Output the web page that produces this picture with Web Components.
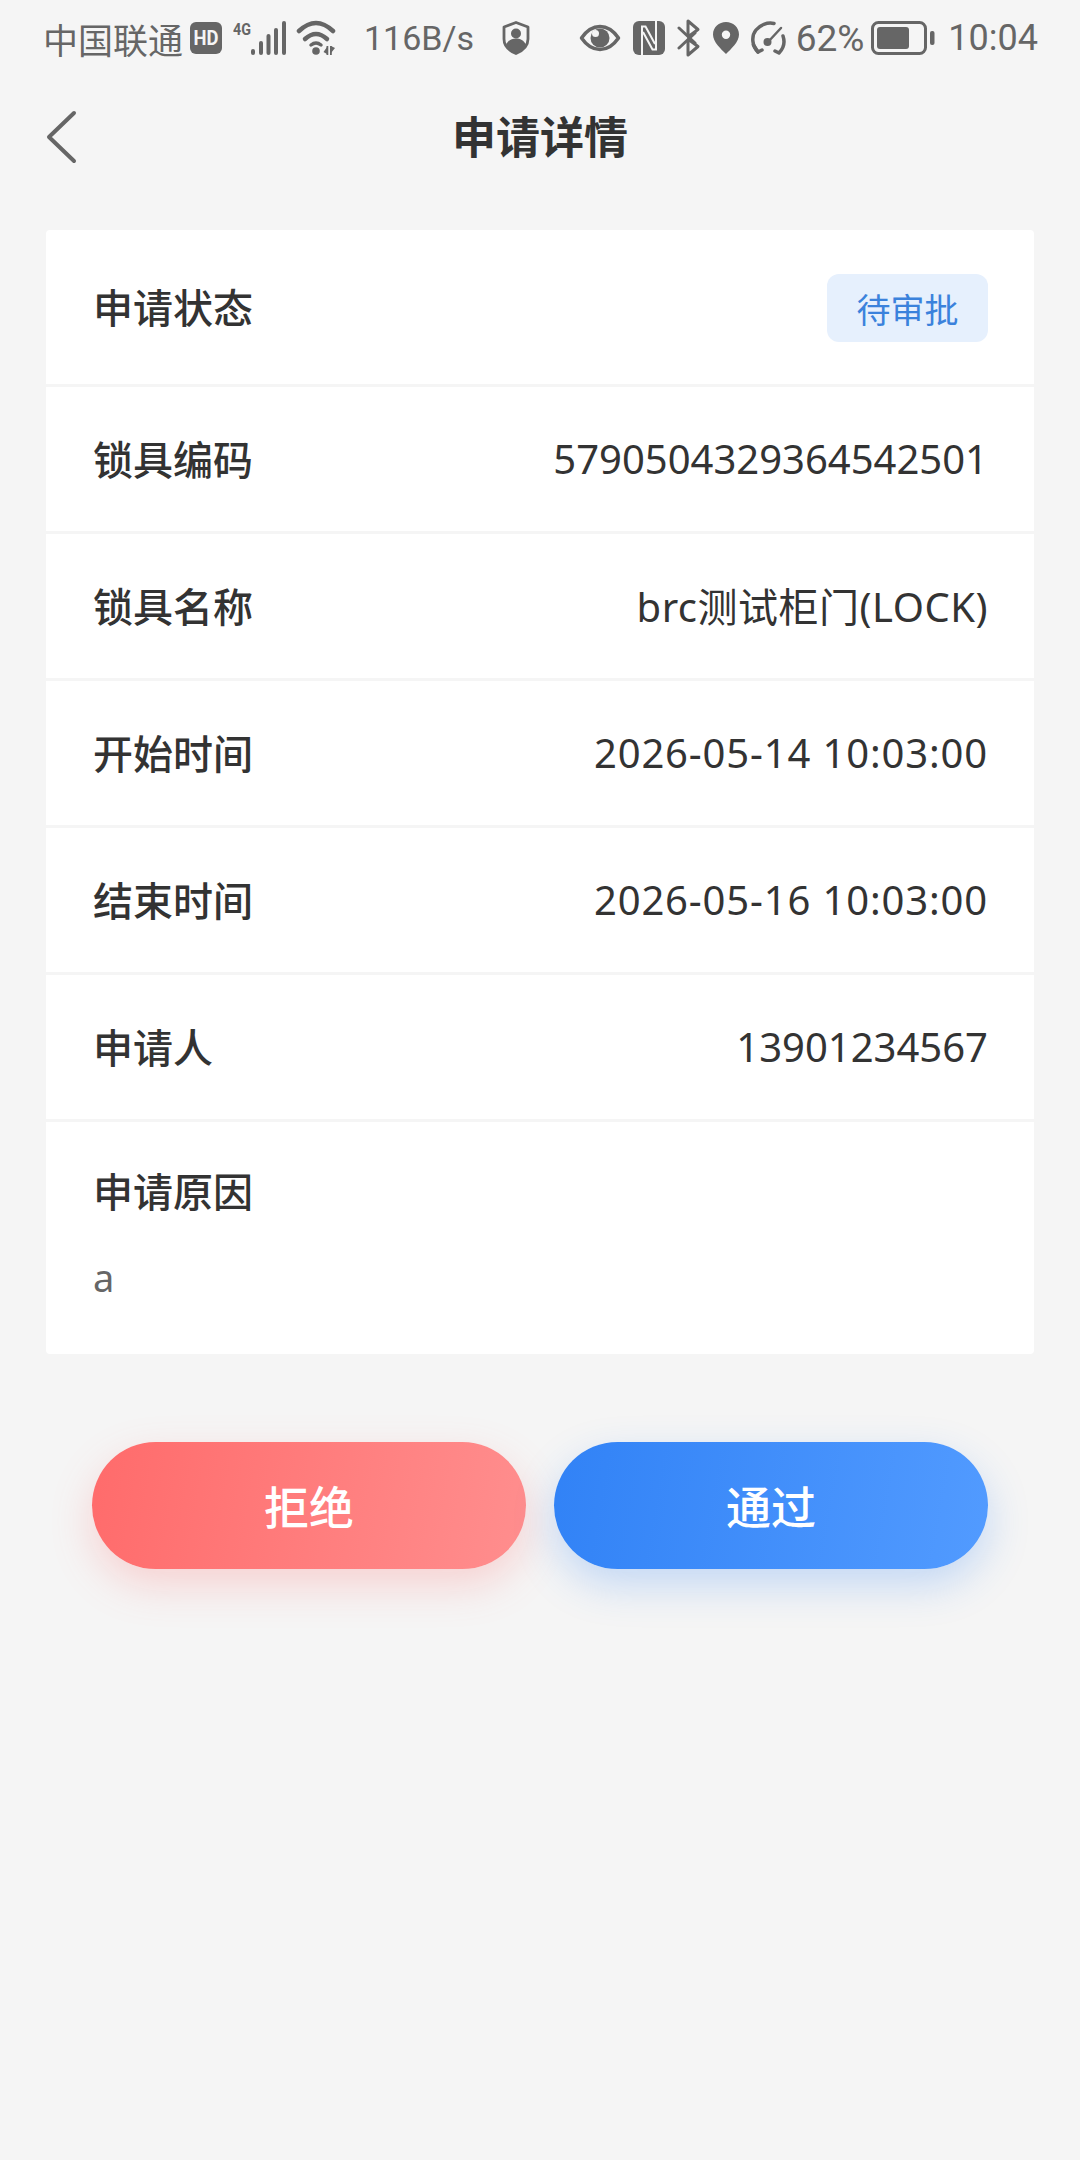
<!DOCTYPE html>
<html lang="zh">
<head>
<meta charset="utf-8">
<title>申请详情</title>
<style>
    html, body {
        margin: 0;
        padding: 0;
        background: #f5f5f5;
    }
    body {
        min-height: 2160px;
        font-family: "Noto Sans", "Noto Sans CJK SC", sans-serif;
    }
</style>
</head>
<body>
<status-bar></status-bar>
<nav-header>申请详情</nav-header>
<detail-card>
    <detail-row label="申请状态" first><status-tag>待审批</status-tag></detail-row>
    <detail-row label="锁具编码">5790504329364542501</detail-row>
    <detail-row label="锁具名称" loose>brc测试柜门(LOCK)</detail-row>
    <detail-row label="开始时间" wide>2026-05-14 10:03:00</detail-row>
    <detail-row label="结束时间" wide>2026-05-16 10:03:00</detail-row>
    <detail-row label="申请人">13901234567</detail-row>
    <reason-block label="申请原因">a</reason-block>
</detail-card>
<action-bar>
    <pill-button kind="reject">拒绝</pill-button>
    <pill-button kind="pass">通过</pill-button>
</action-bar>

<script>
class StatusBar extends HTMLElement {
    constructor() {
        super();
        this.attachShadow({ mode: 'open' });
        this.shadowRoot.innerHTML = `
            <style>
                :host {
                    display: flex;
                    align-items: center;
                    height: 76px;
                    padding: 0 42px 0 43px;
                    color: #666666;
                    font-size: 35px;
                    font-family: "Roboto", "Noto Sans CJK SC", sans-serif;
                    white-space: nowrap;
                }
                svg { display: block; flex: none; fill: #666666; }
                .line { fill: none; stroke: #666666; stroke-linecap: round; stroke-linejoin: round; }
                .carrier { font-size: 35px; margin-right: 7px; }
                .speed { margin-left: 24px; font-size: 34px; width: 110px; }
                .pct { font-size: 37px; margin-left: 8.500px; }
                .time { font-size: 36px; margin-left: 13px; }
                .spacer { flex: 1; }
                text { font-family: "Roboto", sans-serif; font-weight: 700; }
            </style>
            <span class="carrier">中国联通</span>
            <svg width="32" height="32" viewBox="0 0 32 32" aria-hidden="true">
                <rect width="32" height="32" rx="6"/>
                <text x="16" y="23" font-size="20" text-anchor="middle" textLength="25" lengthAdjust="spacingAndGlyphs" fill="#f5f5f5">HD</text>
            </svg>
            <svg width="54" height="34" viewBox="0 0 54 34" style="margin-left:11px" aria-hidden="true">
                <text x="0" y="14" font-size="16" textLength="18" lengthAdjust="spacingAndGlyphs">4G</text>
                <rect x="18" y="28" width="4" height="6" rx="2"/>
                <rect x="26" y="20" width="4" height="14" rx="2"/>
                <rect x="33.500" y="13" width="4" height="21" rx="2"/>
                <rect x="41" y="7" width="4" height="27" rx="2"/>
                <rect x="49" y="0" width="4" height="34" rx="2"/>
            </svg>
            <svg width="44" height="36" viewBox="0 0 44 36" style="margin-left:9px" aria-hidden="true">
                <path class="line" stroke-width="4.500" d="M3 11Q20 -5 37 11"/>
                <path class="line" stroke-width="4.500" d="M9 19Q20 9 31 19"/>
                <path class="line" stroke-width="3.500" d="M15 25Q20 21 25 25"/>
                <circle cx="20" cy="31" r="3.800"/>
                <path d="M31 34v-7l-3.500 5zM35 26v7l4-5z"/>
                <rect x="30.500" y="26" width="1.800" height="9"/>
                <rect x="34" y="26" width="1.800" height="9"/>
            </svg>
            <span class="speed">116B/s</span>
            <svg width="28" height="34" viewBox="0 0 28 34" style="margin-left:28px" aria-hidden="true">
                <path class="line" stroke-width="2.800" d="M14 1.500L26 6v12c0 7-6 12-12 14.500C8 30 2 25 2 18V6z"/>
                <circle cx="14" cy="12.500" r="5"/>
                <path d="M4 24c2-5 6-6.500 10-6.500s8 1.500 10 6.500c-2 4-6 7-10 9-4-2-8-5-10-9z"/>
            </svg>
            <span class="spacer"></span>
            <svg width="42" height="28" viewBox="0 0 42 28" aria-hidden="true">
                <path class="line" stroke-width="3.500" d="M2.500 14C8 6 14 2.500 21 2.500S34 6 39.500 14C34 22 28 25.500 21 25.500S8 22 2.500 14z"/>
                <circle cx="21" cy="14" r="9.500"/>
                <circle cx="16.500" cy="9.500" r="3.500" fill="#f5f5f5"/>
            </svg>
            <svg width="32" height="34" viewBox="0 0 32 34" style="margin-left:12px" aria-hidden="true">
                <rect width="32" height="34" rx="6"/>
                <path d="M9 34V5.500h3.500L22 23" stroke="#f5f5f5" stroke-width="2" fill="none"/>
                <path d="M23 0v28.500h-3.500L10 11" stroke="#f5f5f5" stroke-width="2" fill="none"/>
            </svg>
            <svg width="24" height="38" viewBox="0 0 24 38" style="margin-left:12px" aria-hidden="true">
                <path class="line" stroke-width="3" d="M2 9L18 24"/>
                <path class="line" stroke-width="3" d="M2 29L18 14"/>
                <path class="line" stroke-width="3" d="M11 16V2l10 8.500-9.500 7"/>
                <path class="line" stroke-width="3" d="M11 22v14l10-8.500-9.500-7"/>
            </svg>
            <svg width="26" height="32" viewBox="0 0 26 32" style="margin-left:12px" aria-hidden="true">
                <path fill-rule="evenodd" d="M13 0c7 0 13 5 13 12.500C26 20 18 27 13 32 8 27 0 20 0 12.500 0 5 6 0 13 0zm0 8.500a4.200 4.200 0 1 0 0 8.400 4.200 4.200 0 0 0 0-8.400z"/>
            </svg>
            <svg width="36" height="34" viewBox="0 0 36 34" style="margin-left:12px" aria-hidden="true">
                <path class="line" stroke-width="3.500" d="M7 31C1 25 0 15 5 9c4-5 11-8 18-6.500"/>
                <path class="line" stroke-width="3.500" d="M2.500 24L7 31l4-2"/>
                <path class="line" stroke-width="3.500" d="M32 15c2 6 1 12-4 17l-4-2"/>
                <path class="line" stroke-width="2.500" d="M17 21L30 7"/>
                <circle cx="16.500" cy="21" r="4"/>
            </svg>
            <span class="pct">62%</span>
            <svg width="64" height="34" viewBox="0 0 64 34" style="margin-left:7px" aria-hidden="true">
                <rect class="line" x="1.500" y="1.500" width="53" height="31" rx="6" stroke-width="3"/>
                <rect x="6" y="6" width="32" height="22" rx="3"/>
                <rect x="59" y="10" width="4.500" height="14" rx="2"/>
            </svg>
            <span class="time">10:04</span>
        `;
    }
}

class NavHeader extends HTMLElement {
    constructor() {
        super();
        this.attachShadow({ mode: 'open' });
        this.shadowRoot.innerHTML = `
            <style>
                :host {
                    display: grid;
                    grid-template-columns: 1fr auto 1fr;
                    align-items: center;
                    height: 121px;
                    padding: 0 46px;
                    margin-bottom: 33px;
                    box-sizing: border-box;
                }
                svg { display: block; fill: none; stroke: #666666; stroke-width: 4; stroke-linecap: round; stroke-linejoin: round; }
                .title {
                    font-size: 44px;
                    font-weight: 700;
                    color: #333333;
                    padding-bottom: 3px;
                    font-family: "Noto Sans CJK SC", sans-serif;
                }
            </style>
            <svg width="32" height="54" viewBox="0 0 32 54" aria-hidden="true">
                <path d="M28 3L3 27l25 24"/>
            </svg>
            <span class="title"><slot></slot></span>
        `;
    }
}

class DetailCard extends HTMLElement {
    constructor() {
        super();
        this.attachShadow({ mode: 'open' });
        this.shadowRoot.innerHTML = `
            <style>
                :host {
                    display: block;
                    margin: 0 46px;
                    background: #ffffff;
                    border-radius: 4px;
                    overflow: hidden;
                }
            </style>
            <slot></slot>
        `;
    }
}

class DetailRow extends HTMLElement {
    constructor() {
        super();
        this.attachShadow({ mode: 'open' });
        this.shadowRoot.innerHTML = `
            <style>
                :host {
                    display: flex;
                    justify-content: space-between;
                    align-items: center;
                    box-sizing: border-box;
                    height: 147px;
                    padding: 0 46px 0 47px;
                    border-bottom: 3px solid #f5f5f5;
                    font-size: 40px;
                    color: #333333;
                    font-family: "Noto Sans", "Noto Sans CJK SC", sans-serif;
                    white-space: nowrap;
                }
                :host([first]) { height: 157px; padding-top: 2px; }
                :host([wide]) { letter-spacing: 0.85px; }
                :host([loose]) { letter-spacing: 0.5px; }
                :host(:not([first])) .value { padding-bottom: 2px; }
                .label {
                    font-family: "Noto Sans CJK SC", sans-serif;
                    font-size: 40px;
                    font-weight: 500;
                    letter-spacing: 0;
                    padding-bottom: 3px;
                }
                :host([first]) .label { padding-bottom: 5px; }
            </style>
            <span class="label"></span>
            <span class="value"><slot></slot></span>
        `;
        this.shadowRoot.querySelector('.label').textContent = this.getAttribute('label');
    }
}

class StatusTag extends HTMLElement {
    constructor() {
        super();
        this.attachShadow({ mode: 'open' });
        this.shadowRoot.innerHTML = `
            <style>
                :host {
                    display: flex;
                    align-items: center;
                    justify-content: center;
                    width: 161px;
                    height: 68px;
                    border-radius: 12px;
                    background: #e6f0fd;
                    color: #3b82dc;
                    font-size: 34px;
                    font-family: "Noto Sans CJK SC", sans-serif;
                }
            </style>
            <slot></slot>
        `;
    }
}

class ReasonBlock extends HTMLElement {
    constructor() {
        super();
        this.attachShadow({ mode: 'open' });
        this.shadowRoot.innerHTML = `
            <style>
                :host {
                    display: block;
                    box-sizing: border-box;
                    height: 232px;
                    padding: 39px 47px 0;
                }
                .label {
                    font-size: 40px;
                    font-weight: 500;
                    line-height: 58px;
                    color: #333333;
                    font-family: "Noto Sans CJK SC", sans-serif;
                }
                .text {
                    margin-top: 33px;
                    font-size: 38px;
                    line-height: 50px;
                    color: #666666;
                    font-family: "Noto Sans", "Noto Sans CJK SC", sans-serif;
                }
            </style>
            <div class="label"></div>
            <div class="text"><slot></slot></div>
        `;
        this.shadowRoot.querySelector('.label').textContent = this.getAttribute('label');
    }
}

class ActionBar extends HTMLElement {
    constructor() {
        super();
        this.attachShadow({ mode: 'open' });
        this.shadowRoot.innerHTML = `
            <style>
                :host {
                    display: grid;
                    grid-template-columns: 1fr 1fr;
                    gap: 28px;
                    margin-top: 88px;
                    padding: 0 92px 80px;
                }
            </style>
            <slot></slot>
        `;
    }
}

class PillButton extends HTMLElement {
    constructor() {
        super();
        this.attachShadow({ mode: 'open' });
        this.shadowRoot.innerHTML = `
            <style>
                :host {
                    display: flex;
                    align-items: center;
                    justify-content: center;
                    height: 127px;
                    border-radius: 64px;
                    color: #ffffff;
                    font-size: 45px;
                    font-weight: 500;
                    font-family: "Noto Sans CJK SC", sans-serif;
                }
                :host([kind="reject"]) {
                    background: linear-gradient(100deg, #ff6b6b, #ff8e8e);
                    box-shadow: 0 16px 40px rgba(255, 107, 107, 0.25);
                }
                :host([kind="pass"]) {
                    background: linear-gradient(100deg, #3182f6, #529bff);
                    box-shadow: 0 16px 40px rgba(49, 130, 246, 0.25);
                }
            </style>
            <slot></slot>
        `;
    }
}

customElements.define('status-bar', StatusBar);
customElements.define('nav-header', NavHeader);
customElements.define('detail-card', DetailCard);
customElements.define('detail-row', DetailRow);
customElements.define('status-tag', StatusTag);
customElements.define('reason-block', ReasonBlock);
customElements.define('action-bar', ActionBar);
customElements.define('pill-button', PillButton);
</script>
</body>
</html>
